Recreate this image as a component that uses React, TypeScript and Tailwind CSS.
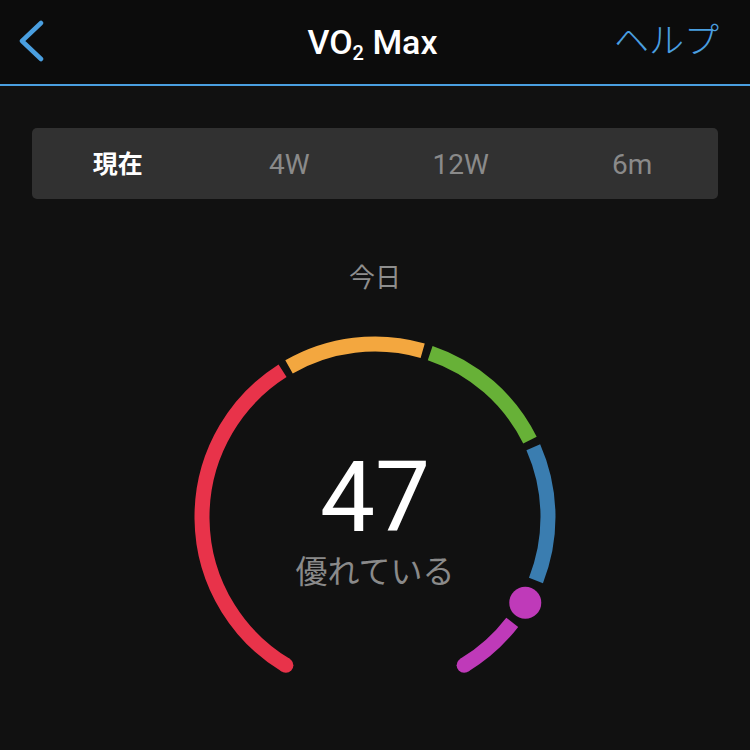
import React from 'react';

const CX = 190;
const CY = 190;
const R = 173;

// angle in degrees, clockwise from 12 o'clock
const pt = (deg: number) => {
  const a = (deg * Math.PI) / 180;
  return { x: CX + R * Math.sin(a), y: CY - R * Math.cos(a) };
};

const arc = (from: number, to: number) => {
  const p1 = pt(from);
  const p2 = pt(to);
  const large = to - from > 180 ? 1 : 0;
  return `M ${p1.x} ${p1.y} A ${R} ${R} 0 ${large} 1 ${p2.x} ${p2.y}`;
};

const segments = [
  { from: -149, to: -32.3, color: '#e8334a' },
  { from: -29.8, to: 16, color: '#f3a73f' },
  { from: 18.6, to: 63.6, color: '#67b137' },
  { from: 66.2, to: 111.5, color: '#3a7db0' },
  { from: 127.5, to: 149, color: '#bf3ab9' },
];

const tabs = ['現在', '4W', '12W', '6m'];

function Gauge() {
  const start = pt(-149);
  const end = pt(149);
  const dot = pt(119.7);
  return (
    <div className="grid justify-center mt-[33px]">
      <svg width={380} height={380} viewBox="0 0 380 380" className="col-start-1 row-start-1">
        {segments.map((s) => (
          <path key={s.from} d={arc(s.from, s.to)} stroke={s.color} strokeWidth={15} fill="none" />
        ))}
        <circle cx={start.x} cy={start.y} r={7.5} fill="#e8334a" />
        <circle cx={end.x} cy={end.y} r={7.5} fill="#bf3ab9" />
        <circle cx={dot.x} cy={dot.y} r={16} fill="#bf3ab9" />
      </svg>
      <div className="col-start-1 row-start-1 flex flex-col items-center pt-[122px]">
        <div className="text-white text-[98px] leading-none font-normal" style={{ fontFamily: 'Roboto, "Liberation Sans", sans-serif' }}>
          47
        </div>
        <div className="mt-[9px] text-[32px] leading-none text-[#8a8a8a]">優れている</div>
      </div>
    </div>
  );
}

export default function App() {
  return (
    <div
      className="w-[750px] h-[750px] bg-[#111111] overflow-hidden"
      style={{ fontFamily: 'Roboto, "Noto Sans CJK JP", sans-serif' }}
    >
      <div className="h-[84px] bg-[#0c0c0c] flex items-center justify-between px-[18px]">
        <svg width={30} height={44} viewBox="0 0 30 44" className="ml-[-1px]">
          <path d="M24 3 L5 21 L24 39" stroke="#4a9fe0" strokeWidth={4.5} strokeLinecap="round" strokeLinejoin="round" fill="none" />
        </svg>
        <div className="text-white text-[34px] font-medium ml-[84px]">
          VO<span className="text-[20px] inline-block translate-y-[6px]">2</span> Max
        </div>
        <div className="text-[#4a9fe0] text-[35px] font-light mr-[13px]">ヘルプ</div>
      </div>
      <div className="h-[2px] bg-[#4a9fe0]" />

      <div className="mt-[42px] mx-[32px] h-[71px] rounded-[5px] bg-[#313131] grid grid-cols-4 items-center pt-[2px]">
        {tabs.map((t, i) => (
          <div
            key={t}
            className={
              i === 0
                ? 'text-center text-white text-[25px] font-bold'
                : 'text-center text-[#8a8a8a] text-[28px]'
            }
          >
            {t}
          </div>
        ))}
      </div>

      <div className="mt-[63px] text-center text-[26px] leading-[32px] text-[#8e8e8e]">今日</div>

      <Gauge />
    </div>
  );
}
